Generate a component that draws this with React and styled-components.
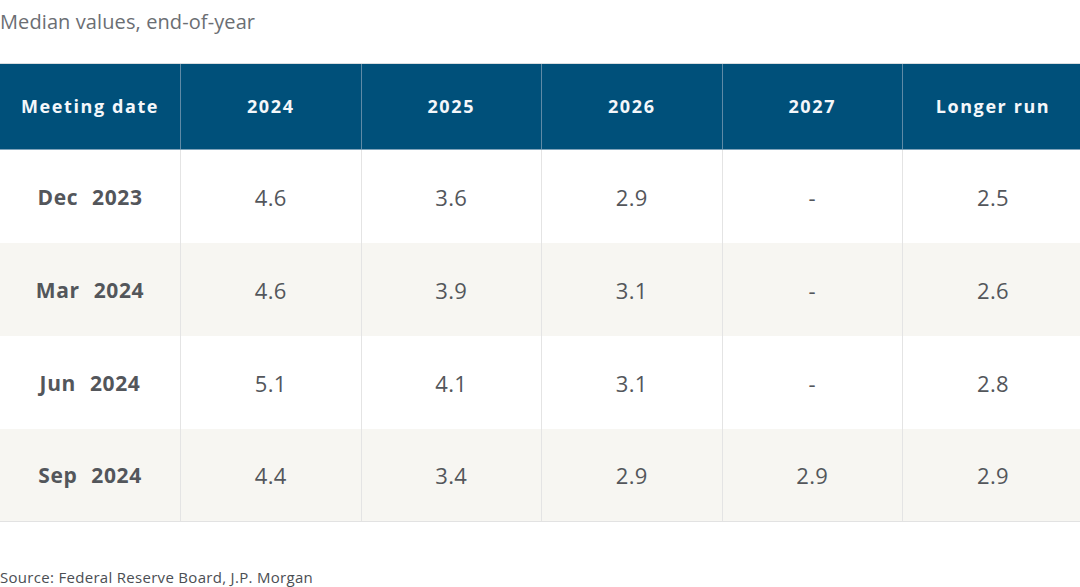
import styled, { createGlobalStyle } from "styled-components";

const GlobalStyle = createGlobalStyle`
  body {
    margin: 0;
    background: #ffffff;
    font-family: "Open Sans", "Noto Sans", sans-serif;
  }
`;

const columns = ["Meeting date", "2024", "2025", "2026", "2027", "Longer run"];

const rows = [
  { month: "Dec", year: "2023", values: ["4.6", "3.6", "2.9", "-", "2.5"] },
  { month: "Mar", year: "2024", values: ["4.6", "3.9", "3.1", "-", "2.6"] },
  { month: "Jun", year: "2024", values: ["5.1", "4.1", "3.1", "-", "2.8"] },
  { month: "Sep", year: "2024", values: ["4.4", "3.4", "2.9", "2.9", "2.9"] },
];

const Page = styled.div`
  width: 1080px;
  height: 587px;
  display: flex;
  flex-direction: column;
  overflow: hidden;
`;

const Title = styled.div`
  height: 63px;
  padding-top: 8px;
  box-sizing: border-box;
  font-size: 20px;
  line-height: 28px;
  color: #6b6e73;
  letter-spacing: 0.1px;
`;

const Table = styled.table`
  width: 1083px;
  flex-shrink: 0;
  table-layout: fixed;
  border-collapse: collapse;
`;

const HeadCell = styled.th`
  height: 84px;
  padding: 0 0 1px;
  background: #00507a;
  color: #f4f7fa;
  font-size: 18px;
  font-weight: 700;
  letter-spacing: 1.6px;
  text-align: center;
  border-top: 1px solid #d9dde0;
  border-bottom: 1px solid #7fa3ba;
  border-left: 1px solid #5f8aa6;

  &:first-child {
    border-left: none;
  }
`;

const Row = styled.tr`
  background: ${(p) => (p.$shaded ? "#f7f6f2" : "#ffffff")};
`;

const Cell = styled.td`
  height: ${(p) => (p.$last ? "92px" : "93px")};
  padding: 0;
  text-align: center;
  color: #53565b;
  font-size: ${(p) => (p.$label ? "21px" : "22px")};
  font-weight: ${(p) => (p.$label ? 700 : 400)};
  letter-spacing: ${(p) => (p.$label ? "0.6px" : "0.4px")};
  border-left: 1px solid #e4e4e4;
  border-bottom: ${(p) => (p.$last ? "1px solid #e2e2e2" : "none")};

  &:first-child {
    border-left: none;
  }
`;

const Year = styled.span`
  margin-left: 14px;
`;

const Source = styled.div`
  margin-top: auto;
  padding-bottom: 1px;
  font-size: 15px;
  line-height: 18px;
  color: #4b4e53;
  letter-spacing: 0.3px;
`;

const App = () => {
  return (
    <Page>
      <GlobalStyle />
      <Title>Median values, end-of-year</Title>
      <Table>
        <thead>
          <tr>
            {columns.map((c) => (
              <HeadCell key={c}>{c}</HeadCell>
            ))}
          </tr>
        </thead>
        <tbody>
          {rows.map((r, i) => (
            <Row key={r.month} $shaded={i % 2 === 1}>
              <Cell $label $last={i === rows.length - 1}>
                {r.month}
                <Year>{r.year}</Year>
              </Cell>
              {r.values.map((v, j) => (
                <Cell key={j} $last={i === rows.length - 1}>
                  {v}
                </Cell>
              ))}
            </Row>
          ))}
        </tbody>
      </Table>
      <Source>Source: Federal Reserve Board, J.P. Morgan</Source>
    </Page>
  );
};

export default App;
